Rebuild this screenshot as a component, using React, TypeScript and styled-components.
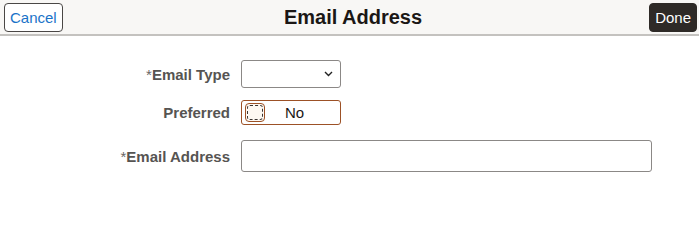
import React from "react";
import styled, { createGlobalStyle } from "styled-components";

const Global = createGlobalStyle`
  html, body { margin: 0; padding: 0; background: #ffffff; }
  body { font-family: Arial, "Liberation Sans", sans-serif; }
`;

const Page = styled.div`
  width: 699px;
  height: 204px;
  background: #ffffff;
  display: flex;
  flex-direction: column;
`;

const Header = styled.header`
  height: 34px;
  background: #f8f7f5;
  border-bottom: 2px solid #c4c2bf;
  display: grid;
  grid-template-columns: 1fr auto 1fr;
  align-items: center;
  padding: 0 2px 0 4px;
`;

const Title = styled.h1`
  margin: 0;
  font-size: 20px;
  font-weight: bold;
  color: #1b1715;
  padding-left: 5px;
`;

const HeaderButton = styled.button<{ $primary?: boolean }>`
  height: 29px;
  padding: 0 5px;
  font-family: Arial, "Liberation Sans", sans-serif;
  font-size: 15px;
  border-radius: 4px;
  cursor: pointer;
  justify-self: ${(p) => (p.$primary ? "end" : "start")};
  background: ${(p) => (p.$primary ? "#2e2a27" : "#ffffff")};
  color: ${(p) => (p.$primary ? "#ffffff" : "#1a73c8")};
  border: 1px solid ${(p) => (p.$primary ? "#2e2a27" : "#4a4745")};
  margin-top: 1px;
`;

const Form = styled.div`
  display: grid;
  grid-template-columns: 230px auto;
  column-gap: 11px;
  row-gap: 12px;
  padding-top: 24px;
  align-items: center;
`;

const Label = styled.label<{ $gapAbove?: boolean }>`
  justify-self: end;
  font-size: 15px;
  font-weight: bold;
  color: #565452;
  margin-top: ${(p) => (p.$gapAbove ? "3px" : "0")};
`;

const Req = styled.span`
  font-weight: normal;
  color: #6a6664;
`;

const SelectBox = styled.div`
  width: 91px;
  height: 26px;
  border: 1px solid #8b8886;
  border-radius: 3px;
  display: flex;
  align-items: center;
  justify-content: flex-end;
  padding-right: 7px;
  box-sizing: content-box;
`;

const Toggle = styled.div`
  width: 95px;
  height: 23px;
  border: 1px solid #9c5126;
  border-radius: 3px;
  display: flex;
  align-items: center;
  padding-left: 3px;
  gap: 20px;
  box-sizing: content-box;
`;

const Knob = styled.div`
  width: 18px;
  height: 17px;
  border: 1.5px solid #9c5126;
  border-radius: 4px;
  background: #fdf8f2;
  position: relative;
  &::after {
    content: "";
    position: absolute;
    inset: 1px;
    border: 1px dashed #3a3431;
    border-radius: 3px;
  }
`;

const ToggleText = styled.span`
  font-size: 15px;
  color: #1b1715;
`;

const TextInput = styled.div`
  width: 409px;
  height: 30px;
  margin-top: 3px;
  border: 1px solid #8b8886;
  border-radius: 3px;
`;

export default function App() {
  return (
    <>
      <Global />
      <Page>
        <Header>
          <HeaderButton>Cancel</HeaderButton>
          <Title>Email Address</Title>
          <HeaderButton $primary>Done</HeaderButton>
        </Header>
        <Form>
          <Label>
            <Req>*</Req>Email Type
          </Label>
          <SelectBox>
            <svg width="9" height="6" viewBox="0 0 9 6">
              <path d="M1 1 L4.5 4.5 L8 1" fill="none" stroke="#222" strokeWidth="1.4" />
            </svg>
          </SelectBox>
          <Label>Preferred</Label>
          <Toggle>
            <Knob />
            <ToggleText>No</ToggleText>
          </Toggle>
          <Label $gapAbove>
            <Req>*</Req>Email Address
          </Label>
          <TextInput />
        </Form>
      </Page>
    </>
  );
}
